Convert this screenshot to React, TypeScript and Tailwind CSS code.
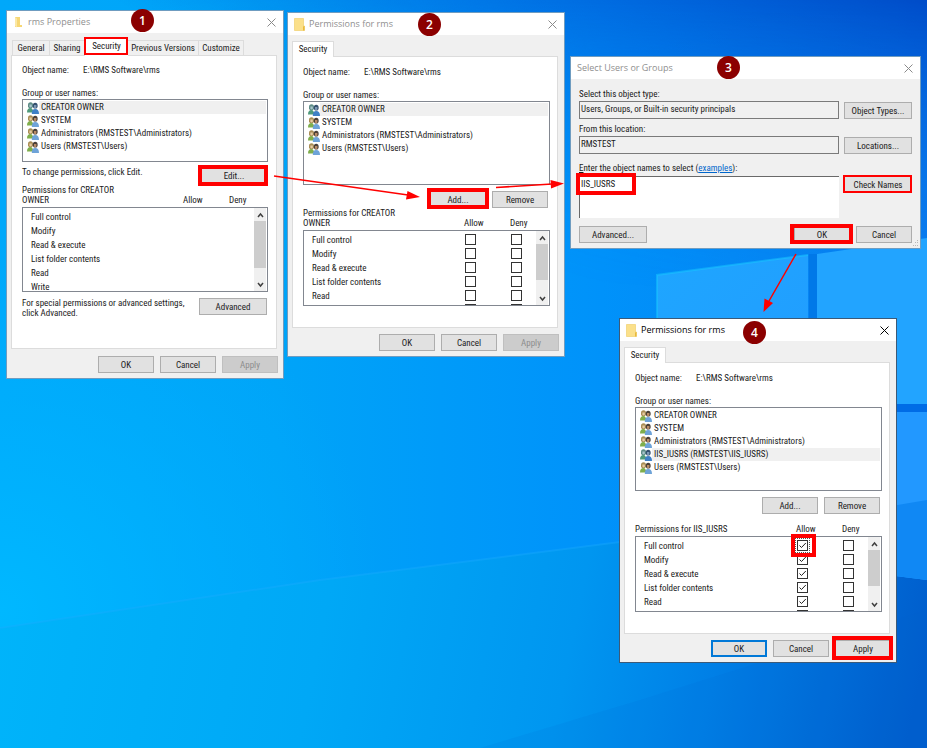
import type { ReactNode } from "react";

type Perm = { name: string; allow?: boolean };

const basePerms = ["Full control", "Modify", "Read & execute", "List folder contents", "Read", "Write"];
const plainPerms: Perm[] = basePerms.map((name) => ({ name }));
const grantedPerms: Perm[] = basePerms.map((name) => ({ name, allow: true }));

const baseGroups = [
  "CREATOR OWNER",
  "SYSTEM",
  "Administrators (RMSTEST\\Administrators)",
  "Users (RMSTEST\\Users)",
];
const groupsWithIis = [...baseGroups.slice(0, 3), "IIS_IUSRS (RMSTEST\\IIS_IUSRS)", baseGroups[3]];

const badges = [
  { n: 1, pos: "left-[131px] top-[9px]" },
  { n: 2, pos: "left-[418px] top-[13px]" },
  { n: 3, pos: "left-[717px] top-[56px]" },
  { n: 4, pos: "left-[743px] top-[321px]" },
];

const highlights = [
  "left-[84px] top-[37px] h-[18px] w-[44px] border-2",
  "left-[198px] top-[165px] h-[21px] w-[70px] border-4",
  "left-[427px] top-[188px] h-[21px] w-[62px] border-4",
  "left-[576px] top-[173px] h-[22px] w-[60px] border-4",
  "left-[843px] top-[175px] h-[18px] w-[69px] border-2",
  "left-[790px] top-[224px] h-[20px] w-[63px] border-4",
  "left-[791px] top-[534px] h-[23px] w-[25px] border-4",
  "left-[832px] top-[636px] h-[24px] w-[61px] border-4",
];

function Wallpaper() {
  return (
    <svg className="absolute inset-0 h-full w-full" viewBox="0 0 927 748" preserveAspectRatio="none" aria-hidden="true">
      <defs>
        <linearGradient id="sky" x1="0" y1="0" x2="1" y2="0">
          <stop offset="0" stopColor="#00a8fa" />
          <stop offset="0.3" stopColor="#00a4f8" />
          <stop offset="0.65" stopColor="#0092fa" />
          <stop offset="1" stopColor="#0a7ef0" />
        </linearGradient>
        <linearGradient id="top" x1="0.3" y1="0.35" x2="1" y2="0">
          <stop offset="0" stopColor="#0060d8" stopOpacity="0" />
          <stop offset="0.5" stopColor="#0064dc" stopOpacity="0.7" />
          <stop offset="1" stopColor="#004cc8" />
        </linearGradient>
        <linearGradient id="floor" gradientUnits="userSpaceOnUse" x1="0" y1="600" x2="900" y2="780">
          <stop offset="0" stopColor="#00b4fa" />
          <stop offset="0.35" stopColor="#00a8f6" />
          <stop offset="0.62" stopColor="#0096f0" />
          <stop offset="0.78" stopColor="#007fe6" />
          <stop offset="1" stopColor="#005ecd" />
        </linearGradient>
        <radialGradient id="glow" gradientUnits="userSpaceOnUse" cx="0" cy="610" r="380">
          <stop offset="0" stopColor="#00b8ff" />
          <stop offset="1" stopColor="#00b0ff" stopOpacity="0" />
        </radialGradient>
        <linearGradient id="fade" x1="0" y1="0" x2="0" y2="1">
          <stop offset="0" stopColor="#fff" />
          <stop offset="1" stopColor="#000" />
        </linearGradient>
        <mask id="topMask">
          <rect width="927" height="290" fill="url(#fade)" />
        </mask>
        <linearGradient id="pane" x1="0" y1="0" x2="1" y2="1">
          <stop offset="0" stopColor="#1ea6ff" />
          <stop offset="1" stopColor="#229cff" />
        </linearGradient>
      </defs>
      <rect width="927" height="748" fill="url(#sky)" />
      <rect width="927" height="290" fill="url(#top)" mask="url(#topMask)" />
      <rect width="927" height="748" fill="url(#glow)" />
      <path d="M0 628 L320 580 L620 542 L927 580 V748 H0 Z" fill="url(#floor)" />
      <path d="M0 628 L320 580 L620 542" stroke="#1cacff" strokeWidth="2" strokeOpacity="0.35" fill="none" />
      <path d="M480 748 L640 700 L927 610 V748 Z" fill="#0060cc" fillOpacity="0.1" />
      <path d="M657 275 L808 255 V404 H657 Z" fill="url(#pane)" />
      <path d="M657 400 V275 L808 255" stroke="#18c8ff" strokeWidth="2" strokeOpacity="0.5" fill="none" />
      <path d="M809 254 H817 V404 H809 Z" fill="#0078e8" />
      <path d="M817 254 L927 238 V404 H817 Z" fill="#22a4ff" />
      <path d="M657 404 H927 V412 H657 Z" fill="#006ce6" />
      <path d="M657 412 H927 V580 L657 545 Z" fill="#2298ff" />
      <path d="M880 508 L927 500 V580 L880 574 Z" fill="#1088f4" />
    </svg>
  );
}

function FolderIcon({ open }: { open?: boolean }) {
  return open ? (
    <svg className="ml-px h-3 w-2.5" viewBox="0 0 10 12" aria-hidden="true">
      <path d="M1 1 H6 V9 H8 V11 H1 Z" fill="#f7d774" />
      <path d="M1 1 L3 2.500 V11.500 L1 10 Z" fill="#fbe8a6" />
    </svg>
  ) : (
    <svg className="h-[13px] w-[11px]" viewBox="0 0 11 13" aria-hidden="true">
      <path d="M0.500 0.500 H9.500 V8 H10.500 V12.500 H0.500 Z" fill="#fbe08a" stroke="#efcb62" strokeWidth="0.600" />
      <path d="M9 8.500 L10.500 8 V12.500 H9 Z" fill="#e9b93c" />
    </svg>
  );
}

function UsersIcon({ selected }: { selected: boolean }) {
  return (
    <svg className="h-3 w-3 shrink-0" viewBox="0 0 12 12" aria-hidden="true">
      <path d="M1 3 Q1 0.300 3.600 0.300 Q6 0.300 6 3 V5 L4.600 6.200 H2.300 L1 5 Z" fill={selected ? "#5d8c86" : "#a98d55"} />
      <path d="M2.400 2.600 h2.400 v2.200 q-1.200 1.400 -2.400 0 Z" fill={selected ? "#a8c4cc" : "#e6cba2"} />
      <path d="M0 10.500 Q0 6 3.400 6 Q6 6 6.400 10.500 Z" fill={selected ? "#4f9a7c" : "#7fae4c"} />
      <path d="M5.800 3.300 Q5.800 0.700 8.200 0.700 Q10.600 0.700 10.600 3.300 V5 L9.400 6.600 H7 L5.800 5 Z" fill={selected ? "#34506e" : "#4b4038"} />
      <path d="M7 3 h2.400 v2.400 q-1.200 1.400 -2.400 0 Z" fill={selected ? "#7c96b4" : "#b98b66"} />
      <path d="M4.800 12 Q4.600 7 8.200 7 Q12 7 12 12 Z" fill={selected ? "#3f80c6" : "#6ea3d8"} />
    </svg>
  );
}

function WinButton({ children, className = "w-14", disabled, primary }: {
  children: ReactNode;
  className?: string;
  disabled?: boolean;
  primary?: boolean;
}) {
  const tone = disabled
    ? "border border-[#bfbfbf] bg-[#cccccc] text-[#8c8c8c]"
    : primary
      ? "border-2 border-[#0078d7] bg-[#e1e1e1]"
      : "border border-[#adadad] bg-[#e1e1e1]";
  return (
    <button type="button" disabled={disabled} className={`flex h-[17px] shrink-0 items-center justify-center whitespace-nowrap ${tone} ${className}`}>
      {children}
    </button>
  );
}

function Win({ title, icon, active, className, children }: {
  title: string;
  icon?: ReactNode;
  active?: boolean;
  className: string;
  children: ReactNode;
}) {
  return (
    <section className={`absolute flex flex-col border bg-[#f0f0f0] ${active ? "border-[#3c5a78]" : "border-[#6f9cc0]"} ${className}`}>
      <header className="flex h-[22px] items-center gap-1 bg-white pl-1.5 pr-[7px]">
        {icon}
        <h2 className={`flex-1 font-['Open_Sans',sans-serif] text-[9px] ${active ? "text-black" : "text-[#8f8f8f]"}`}>{title}</h2>
        <button type="button" aria-label="Close" className={active ? "text-black" : "text-[#8a8a8a]"}>
          <svg className="h-[9px] w-[9px]" viewBox="0 0 9 9" aria-hidden="true">
            <path d="M0.500 0.500 L8.500 8.500 M8.500 0.500 L0.500 8.500" stroke="currentColor" fill="none" />
          </svg>
        </button>
      </header>
      {children}
    </section>
  );
}

function SecurityTab() {
  return (
    <button type="button" role="tab" aria-selected="true" className="relative z-10 -mb-px h-4 w-[42px] border border-b-0 border-[#dcdcdc] bg-white pb-0.5">
      Security
    </button>
  );
}

function ObjectName() {
  return (
    <p className="flex">
      <span className="w-[61px]">Object name:</span>
      <span>E:\RMS Software\rms</span>
    </p>
  );
}

function GroupList({ groups, selected, className }: { groups: string[]; selected: number; className: string }) {
  return (
    <>
      <p className="mt-[13px]">Group or user names:</p>
      <ul className={`mt-px border border-[#828790] bg-white pl-1 pr-px pt-px ${className}`}>
        {groups.map((g, i) => (
          <li key={g} className="flex h-[13px] items-center">
            <UsersIcon selected={i === selected} />
            <span className={`h-[13px] flex-1 px-0.5 leading-[13px] ${i === selected ? "bg-[#f0f0f0]" : ""}`}>{g}</span>
          </li>
        ))}
      </ul>
    </>
  );
}

function Check({ label, checked, focused }: { label: string; checked?: boolean; focused?: boolean }) {
  return (
    <span className={`grid h-[11px] w-[11px] ${focused ? "outline-1 outline-offset-1 outline-dotted outline-[#555555]" : ""}`}>
      <input
        type="checkbox"
        aria-label={label}
        defaultChecked={checked}
        className="peer col-start-1 row-start-1 h-[11px] w-[11px] appearance-none border border-[#333333] bg-white"
      />
      <svg className="pointer-events-none invisible col-start-1 row-start-1 h-[11px] w-[11px] peer-checked:visible" viewBox="0 0 11 11" aria-hidden="true">
        <path d="M2.500 5.500 L4.500 7.500 L8.800 3" stroke="#222222" fill="none" />
      </svg>
    </span>
  );
}

function Arrow({ down }: { down?: boolean }) {
  return (
    <button type="button" aria-label={down ? "Scroll down" : "Scroll up"} className="flex h-[13px] items-center justify-center">
      <svg className="h-1.5 w-[7px]" viewBox="0 0 7 6" aria-hidden="true">
        <path d={down ? "M1 1 L3.500 4 L6 1" : "M1 5 L3.500 2 L6 5"} stroke="#404040" strokeWidth="1.500" fill="none" />
      </svg>
    </button>
  );
}

function PermissionList({ subject, perms, boxes, focusFirst, height, thumb }: {
  subject: ReactNode;
  perms: Perm[];
  boxes?: boolean;
  focusFirst?: boolean;
  height: string;
  thumb: string;
}) {
  // with boxes only five rows fit, the sixth one just shows the tops of its boxes
  const labelled = boxes ? 5 : perms.length;
  return (
    <>
      <div className="flex h-5 items-end">
        <p className="w-[161px]">Permissions for {subject}</p>
        <span className="w-[46px]">Allow</span>
        <span>Deny</span>
      </div>
      <div className={`mt-0.5 flex overflow-hidden border border-[#828790] bg-white pr-px ${height}`}>
        <div className="flex-1 pt-0.5">
          <table className="w-full table-fixed border-collapse text-left">
            <tbody>
              {perms.map((p, i) => (
                <tr key={p.name} className="h-3.5">
                  <th scope="row" className="w-[161px] p-0 pl-2 font-normal">{i < labelled ? p.name : null}</th>
                  <td className="w-[46px] p-0 pt-px align-top">
                    {boxes && <Check label={`Allow ${p.name}`} checked={p.allow} focused={focusFirst && i === 0} />}
                  </td>
                  <td className="p-0 pt-px align-top">{boxes && <Check label={`Deny ${p.name}`} />}</td>
                </tr>
              ))}
            </tbody>
          </table>
        </div>
        <div className="flex w-3 flex-col bg-[#f0f0f0]">
          <Arrow />
          <div className={`bg-[#cdcdcd] ${thumb}`} />
          <div className="flex-1" />
          <Arrow down />
        </div>
      </div>
    </>
  );
}

function PropertiesWindow() {
  const idle = "h-[15px] border border-b-0 border-[#dcdcdc] text-center whitespace-nowrap";
  return (
    <Win title="rms Properties" icon={<FolderIcon open />} className="left-[6px] top-[10px] w-[278px]">
      <div role="tablist" className="ml-[5px] mt-[5px] flex items-end">
        <button type="button" role="tab" className={`${idle} w-[38px]`}>General</button>
        <button type="button" role="tab" className={`${idle} w-[35px] border-l-0`}>Sharing</button>
        <button type="button" role="tab" aria-selected="true" className="relative z-10 -mb-px h-[18px] w-[43px] bg-white pb-0.5">Security</button>
        <button type="button" role="tab" className={`${idle} w-[71px] border-l-0`}>Previous Versions</button>
        <button type="button" role="tab" className={`${idle} w-[45px] border-l-0`}>Customize</button>
      </div>
      <div className="ml-1 mr-1.5 flex h-[294px] flex-col border border-[#dcdcdc] bg-white pl-2.5 pr-2 pt-[9px]">
        <ObjectName />
        <GroupList groups={baseGroups} selected={0} className="h-[63px]" />
        <div className="mb-px mt-[5px] flex justify-between">
          <span>To change permissions, click Edit.</span>
          <WinButton className="w-[68px]">Edit...</WinButton>
        </div>
        <PermissionList subject={<>CREATOR<br />OWNER</>} perms={plainPerms} height="h-[85px]" thumb="h-[47px]" />
        <div className="mt-1.5 flex justify-between pr-px">
          <p className="whitespace-nowrap">
            For special permissions or advanced settings,
            <br />
            click Advanced.
          </p>
          <WinButton className="w-[68px]">Advanced</WinButton>
        </div>
      </div>
      <div className="flex justify-end gap-1.5 pb-[5px] pr-[5px] pt-[7px]">
        <WinButton>OK</WinButton>
        <WinButton>Cancel</WinButton>
        <WinButton disabled>Apply</WinButton>
      </div>
    </Win>
  );
}

function PermissionsWindow({ active, groups, selected, subject, perms, className }: {
  active?: boolean;
  groups: string[];
  selected: number;
  subject: ReactNode;
  perms: Perm[];
  className: string;
}) {
  return (
    <Win title="Permissions for rms" icon={<FolderIcon />} active={active} className={`w-[278px] ${className}`}>
      <div role="tablist" className="ml-1 mt-1.5 flex">
        <SecurityTab />
      </div>
      <div className="ml-1 mr-1.5 flex h-[272px] flex-col border border-[#dcdcdc] bg-white pl-2.5 pr-[7px] pt-2.5">
        <ObjectName />
        <GroupList groups={groups} selected={selected} className="h-[84px]" />
        <div className="mt-1.5 flex justify-end gap-1.5 pr-0.5">
          <WinButton>Add...</WinButton>
          <WinButton>Remove</WinButton>
        </div>
        <PermissionList subject={subject} perms={perms} boxes focusFirst={active} height="h-[76px]" thumb="h-9" />
      </div>
      <div className="flex justify-end gap-1.5 pb-[5px] pr-[5px] pt-1.5">
        <WinButton primary={active}>OK</WinButton>
        <WinButton>Cancel</WinButton>
        <WinButton disabled={!active}>Apply</WinButton>
      </div>
    </Win>
  );
}

function SelectUsersWindow() {
  const field = "h-[18px] min-w-0 flex-1 border border-[#7a7a7a] bg-[#f0f0f0] px-px pb-0.5";
  return (
    <Win title="Select Users or Groups" className="left-[570px] top-[56px] w-[351px]">
      <div className="flex flex-col px-2 pb-[5px] pt-2.5">
        <label htmlFor="objectType">Select this object type:</label>
        <div className="mt-0.5 flex items-end gap-[5px]">
          <input id="objectType" readOnly value="Users, Groups, or Built-in security principals" className={field} />
          <WinButton className="w-[68px]">Object Types...</WinButton>
        </div>
        <label htmlFor="location" className="mt-[5px]">From this location:</label>
        <div className="mt-0.5 flex items-end gap-[5px]">
          <input id="location" readOnly value="RMSTEST" className={field} />
          <WinButton className="w-[68px]">Locations...</WinButton>
        </div>
        <div className="mt-[9px]">
          <label htmlFor="names"><u>E</u>nter the object names to select</label>{" "}
          (<a href="#examples" className="text-[#0066cc] underline">examples</a>):
        </div>
        <div className="mt-[3px] flex items-start gap-[5px]">
          <textarea
            id="names"
            defaultValue="IIS_IUSRS"
            className="h-[42px] min-w-0 flex-1 resize-none border-l border-t border-[#696969] bg-white px-px pt-0.5"
          />
          <WinButton className="w-[68px]">Check Names</WinButton>
        </div>
        <div className="mt-2 flex gap-1.5">
          <WinButton className="w-[68px]">Advanced...</WinButton>
          <div className="flex-1" />
          <WinButton>OK</WinButton>
          <WinButton>Cancel</WinButton>
        </div>
      </div>
      <svg className="absolute bottom-px right-px h-[7px] w-[7px]" viewBox="0 0 7 7" fill="#b8b8b8" aria-hidden="true">
        <path d="M5 0h1v1h-1z M5 2h1v1h-1z M3 2h1v1h-1z M5 5h1v1h-1z M3 5h1v1h-1z M1 5h1v1h-1z" />
      </svg>
    </Win>
  );
}

function Annotations() {
  return (
    <div className="pointer-events-none absolute inset-0 z-20">
      {highlights.map((h) => (
        <div key={h} className={`absolute border-[#ff0000] ${h}`} />
      ))}
      <svg className="absolute left-0 top-0 h-[748px] w-[927px]" viewBox="0 0 927 748" fill="#ff0000" stroke="#ff0000" aria-hidden="true">
        <path d="M274 176 L408 195" strokeWidth="1.500" />
        <path d="M420 197 L406 199.500 L407.500 191 Z" stroke="none" />
        <path d="M496 187.500 L552 184" strokeWidth="1.500" />
        <path d="M564 183.500 L551 188.500 L550.500 180 Z" stroke="none" />
        <path d="M796 254 L769 301" strokeWidth="1.500" />
        <path d="M763.500 312 L764.500 298.500 L773 303 Z" stroke="none" />
      </svg>
      {badges.map((b) => (
        <div
          key={b.n}
          className={`absolute flex h-[23px] w-[23px] items-center justify-center rounded-full bg-[#8b0000] font-['Open_Sans',sans-serif] text-xs font-semibold text-white ${b.pos}`}
        >
          {b.n}
        </div>
      ))}
    </div>
  );
}

export default function App() {
  return (
    <main className="relative min-h-screen w-full overflow-hidden font-['Roboto_Condensed',Roboto,sans-serif] text-[9px] leading-[10px] text-[#1a1a1a]">
      <Wallpaper />
      <PropertiesWindow />
      <PermissionsWindow
        groups={baseGroups}
        selected={0}
        subject={<>CREATOR<br />OWNER</>}
        perms={plainPerms}
        className="left-[287px] top-[12px]"
      />
      <SelectUsersWindow />
      <PermissionsWindow
        active
        groups={groupsWithIis}
        selected={3}
        subject="IIS_IUSRS"
        perms={grantedPerms}
        className="left-[619px] top-[318px]"
      />
      <Annotations />
    </main>
  );
}
